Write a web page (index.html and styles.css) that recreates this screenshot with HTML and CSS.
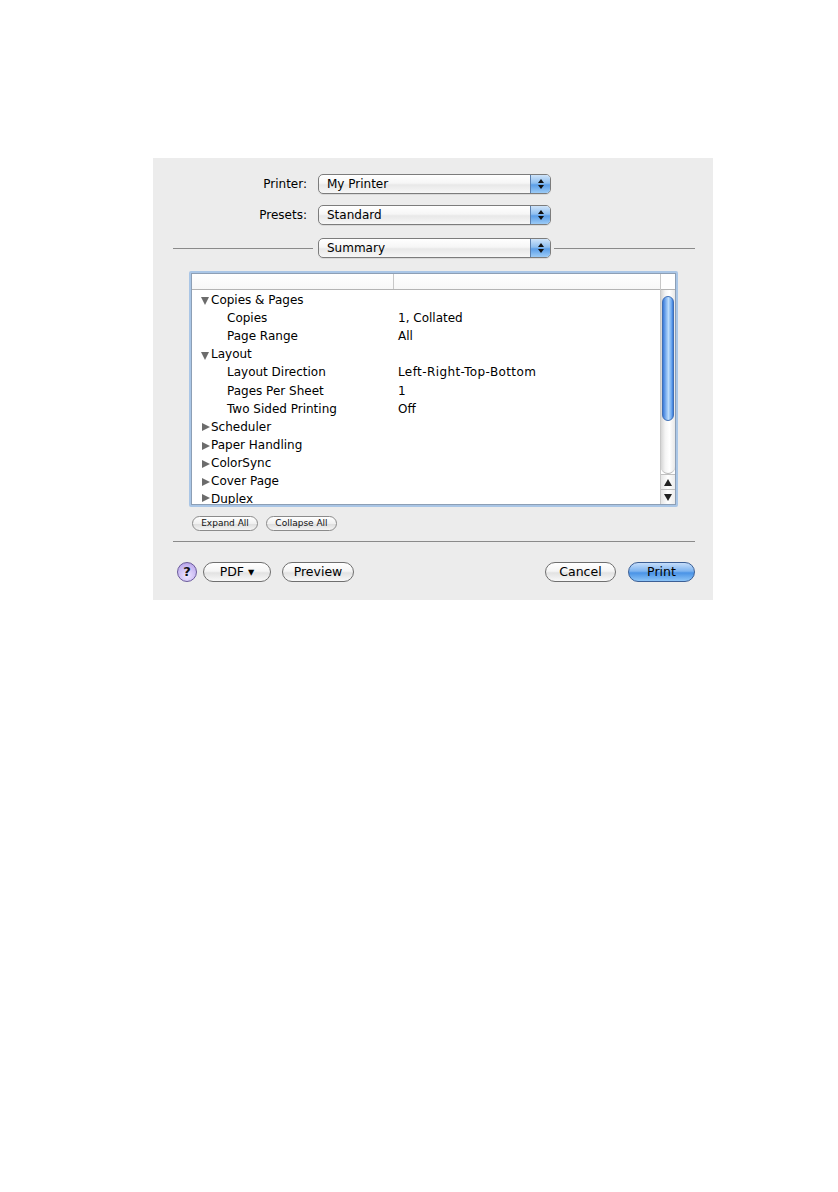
FILE: index.html
```html
<!DOCTYPE html>
<html>
<head>
<meta charset="utf-8">
<link rel="stylesheet" href="styles.css">
</head>
<body>
<div class="dialog">
  <div class="field-row">
    <span class="label">Printer:</span>
    <div class="popup"><span class="popup-text">My Printer</span><span class="popup-arrows"><span class="up"></span><span class="down"></span></span></div>
  </div>
  <div class="field-row row2">
    <span class="label">Presets:</span>
    <div class="popup"><span class="popup-text">Standard</span><span class="popup-arrows"><span class="up"></span><span class="down"></span></span></div>
  </div>
  <div class="section-row">
    <div class="hline left-line"></div>
    <div class="popup"><span class="popup-text">Summary</span><span class="popup-arrows"><span class="up"></span><span class="down"></span></span></div>
    <div class="hline right-line"></div>
  </div>

  <div class="table-ring">
    <div class="table">
      <div class="table-main">
        <div class="thead"><div class="th th1"></div><div class="th th2"></div></div>
        <div class="tbody">
          <div class="tr"><span class="tri down-tri"></span><span class="c1">Copies &amp; Pages</span></div>
          <div class="tr child"><span class="c1">Copies</span><span class="c2">1, Collated</span></div>
          <div class="tr child"><span class="c1">Page Range</span><span class="c2">All</span></div>
          <div class="tr"><span class="tri down-tri"></span><span class="c1">Layout</span></div>
          <div class="tr child"><span class="c1">Layout Direction</span><span class="c2 wide">Left-Right-Top-Bottom</span></div>
          <div class="tr child"><span class="c1">Pages Per Sheet</span><span class="c2">1</span></div>
          <div class="tr child"><span class="c1">Two Sided Printing</span><span class="c2">Off</span></div>
          <div class="tr"><span class="tri right-tri"></span><span class="c1">Scheduler</span></div>
          <div class="tr"><span class="tri right-tri"></span><span class="c1">Paper Handling</span></div>
          <div class="tr"><span class="tri right-tri"></span><span class="c1">ColorSync</span></div>
          <div class="tr"><span class="tri right-tri"></span><span class="c1">Cover Page</span></div>
          <div class="tr last"><span class="tri right-tri"></span><span class="c1">Duplex</span></div>
        </div>
      </div>
      <div class="scrollbar">
        <div class="scroll-head"></div>
        <div class="track"><div class="thumb"></div></div>
        <div class="sbtn"><span class="sup"></span></div>
        <div class="sbtn"><span class="sdown"></span></div>
      </div>
    </div>
  </div>

  <div class="small-buttons">
    <span class="sbutton expand">Expand All</span>
    <span class="sbutton collapse">Collapse All</span>
  </div>

  <div class="hline bottom-line"></div>

  <div class="button-row">
    <span class="help">?</span>
    <span class="button pdf">PDF ▾</span>
    <span class="button preview">Preview</span>
    <span class="spacer"></span>
    <span class="button cancel">Cancel</span>
    <span class="button print">Print</span>
  </div>
</div>
</body>
</html>
```

FILE: styles.css
```css
html, body {
  margin: 0;
  padding: 0;
  background: #ffffff;
}
body {
  font-family: "DejaVu Sans", "Liberation Sans", sans-serif;
  font-size: 12px;
  color: #000;
}
.dialog {
  margin: 158px 0 0 153px;
  width: 560px;
  height: 442px;
  box-sizing: border-box;
  background: #ececec;
  padding: 16px 18px 0 20px;
  display: flex;
  flex-direction: column;
}
.field-row {
  display: flex;
  align-items: center;
  height: 20px;
}
.row2 {
  margin-top: 11px;
}
.label {
  width: 134px;
  text-align: right;
  margin-right: 11px;
}
.popup {
  width: 233px;
  height: 20px;
  box-sizing: border-box;
  border: 1px solid #7c7c7c;
  border-radius: 5px;
  background: linear-gradient(#ffffff, #f6f6f6 45%, #e8e8e8 55%, #f7f7f7);
  display: flex;
  align-items: center;
  overflow: hidden;
  box-shadow: 0 1px 0 rgba(0,0,0,0.08);
}
.popup-text {
  flex: 1;
  padding-left: 8px;
  line-height: 18px;
}
.popup-arrows {
  width: 19px;
  height: 18px;
  border-left: 1px solid #5a7fae;
  background: linear-gradient(#cfe4fa, #8fbff0 45%, #5b9ee8 55%, #9ccbf6);
  display: flex;
  flex-direction: column;
  align-items: center;
  justify-content: center;
  gap: 2px;
}
.popup-arrows .up {
  width: 0; height: 0;
  border-left: 3px solid transparent;
  border-right: 3px solid transparent;
  border-bottom: 4px solid #111;
}
.popup-arrows .down {
  width: 0; height: 0;
  border-left: 3px solid transparent;
  border-right: 3px solid transparent;
  border-top: 4px solid #111;
}
.section-row {
  display: flex;
  align-items: center;
  margin-top: 13px;
  height: 20px;
}
.hline {
  height: 1px;
  background: #8a8a8a;
}
.left-line {
  width: 140px;
  margin-right: 5px;
}
.right-line {
  flex: 1;
  margin-left: 3px;
}
.table-ring {
  margin: 13px 0 0 16px;
  width: 489px;
  height: 236px;
  box-sizing: border-box;
  border: 2px solid #aac6e6;
  border-radius: 2px;
}
.table {
  width: 100%;
  height: 100%;
  box-sizing: border-box;
  border: 1px solid #8d9fb5;
  background: #fff;
  display: flex;
}
.table-main {
  flex: 1;
  display: flex;
  flex-direction: column;
  overflow: hidden;
}
.thead {
  height: 15px;
  flex: none;
  display: flex;
  border-bottom: 1px solid #b4b4b4;
  background: linear-gradient(#ffffff, #f7f7f7);
}
.th1 {
  width: 201px;
  border-right: 1px solid #c8c8c8;
}
.th2 {
  flex: 1;
}
.tbody {
  flex: 1;
  overflow: hidden;
  padding-top: 1px;
}
.tr {
  height: 18.2px;
  display: flex;
  align-items: center;
  position: relative;
  white-space: nowrap;
  line-height: 13px;
}
.tr.last {
  height: 14px;
  align-items: flex-start;
  padding-top: 2px;
  line-height: 12px;
}
.tr .c1 {
  width: 187px;
  padding-left: 19px;
}
.tr.child .c1 {
  padding-left: 35px;
  width: 171px;
}
.tr .c2.wide {
  letter-spacing: 0.4px;
}
.tri {
  position: absolute;
  left: 9px;
  top: 5px;
  width: 0;
  height: 0;
}
.down-tri {
  top: 6px;
  border-left: 4.5px solid transparent;
  border-right: 4.5px solid transparent;
  border-top: 8px solid #6c6c6c;
}
.right-tri {
  left: 10px;
  border-top: 4.5px solid transparent;
  border-bottom: 4.5px solid transparent;
  border-left: 8px solid #6c6c6c;
}
.tr.last .right-tri {
  top: 3px;
}
.scrollbar {
  width: 14px;
  flex: none;
  border-left: 1px solid #c8c8c8;
  display: flex;
  flex-direction: column;
  background: #fff;
}
.scroll-head {
  height: 15px;
  border-bottom: 1px solid #b4b4b4;
  flex: none;
}
.track {
  flex: 1;
  background: linear-gradient(90deg, #d6d6d6, #f4f4f4 30%, #ffffff 60%, #e8e8e8);
  border-radius: 0 0 7px 7px;
  padding-top: 6px;
  box-sizing: border-box;
  border-bottom: 1px solid #b8b8b8;
}
.thumb {
  height: 123px;
  margin: 0 1px;
  border-radius: 6px;
  border: 1px solid #3f6fb6;
  background: linear-gradient(90deg, #3a7ad9, #8dbcf4 35%, #bcdcfb 55%, #6aa6ee 85%, #3a7ad9);
}
.sbtn {
  height: 14px;
  flex: none;
  border-top: 1px solid #c0c0c0;
  display: flex;
  align-items: center;
  justify-content: center;
  background: linear-gradient(90deg, #e6e6e6, #ffffff 50%, #ececec);
}
.sup {
  width: 0; height: 0;
  border-left: 4px solid transparent;
  border-right: 4px solid transparent;
  border-bottom: 7px solid #222;
}
.sdown {
  width: 0; height: 0;
  border-left: 4px solid transparent;
  border-right: 4px solid transparent;
  border-top: 7px solid #222;
}
.small-buttons {
  display: flex;
  gap: 8px;
  margin: 9px 0 0 19px;
}
.sbutton {
  height: 15px;
  box-sizing: border-box;
  border: 1px solid #8b8b8b;
  border-radius: 8px;
  background: linear-gradient(#ffffff, #f0f0f0 50%, #dedede 55%, #f4f4f4);
  font-size: 9px;
  line-height: 13px;
  color: #111;
  text-align: center;
}
.expand {
  width: 66px;
}
.collapse {
  width: 71px;
}
.bottom-line {
  margin-top: 10px;
}
.button-row {
  display: flex;
  align-items: center;
  margin-top: 20px;
  height: 20px;
}
.help {
  width: 20px;
  height: 20px;
  box-sizing: border-box;
  margin-left: 4px;
  border-radius: 50%;
  border: 1px solid #6a5a9a;
  background: radial-gradient(circle at 50% 70%, #ede6ff, #c9b9f3 60%, #a996e0);
  font-weight: bold;
  font-size: 13px;
  line-height: 18px;
  text-align: center;
  color: #111;
}
.button {
  height: 20px;
  box-sizing: border-box;
  border: 1px solid #6f6f6f;
  border-radius: 10px;
  background: linear-gradient(#ffffff, #f5f5f5 45%, #e2e2e2 55%, #f8f8f8);
  line-height: 18px;
  text-align: center;
  font-size: 12.5px;
}
.pdf {
  width: 68px;
  margin-left: 6px;
}
.preview {
  width: 72px;
  margin-left: 11px;
}
.spacer {
  flex: 1;
}
.cancel {
  width: 71px;
}
.print {
  width: 67px;
  margin-left: 12px;
  border-color: #3c5f95;
  background: linear-gradient(#c5ddfa, #7eb4f0 45%, #4a93e6 55%, #8cc4f7);
}
```
